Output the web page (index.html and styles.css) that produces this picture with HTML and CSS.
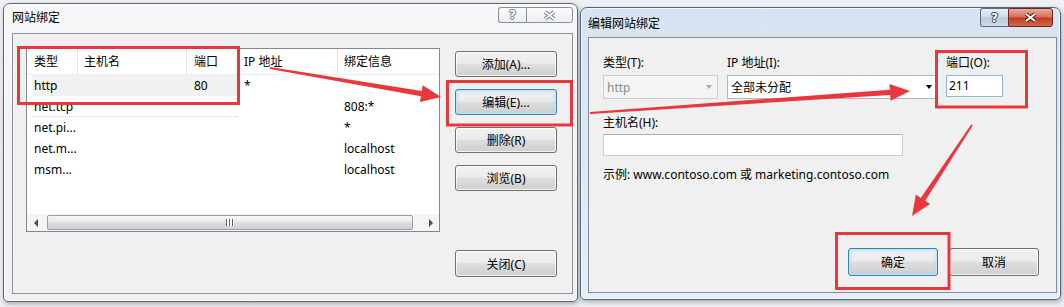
FILE: index.html
```html
<!DOCTYPE html>
<html lang="zh-CN">
<head>
    <meta charset="UTF-8">
    <meta name="viewport" content="width=device-width, initial-scale=1.0">
    <title>网站绑定</title>
    <link rel="stylesheet" href="styles.css">
</head>
<body>
    <div class="screen">
        <!-- 网站绑定 -->
        <div class="dialog bindings">
            <div class="titlebar">
                <span class="title">网站绑定</span>
                <div class="caption">
                    <span class="cap-btn help"><span class="q">?</span></span>
                    <span class="cap-btn close">
                        <svg width="15" height="13" viewBox="-1 -1 15 13"><path d="M2 2 L11 9 M11 2 L2 9" stroke="#7d7f82" stroke-width="4"/><path d="M2 2 L11 9 M11 2 L2 9" stroke="#fbfbfb" stroke-width="2"/></svg>
                    </span>
                </div>
            </div>
            <div class="client">
                <div class="main-row">
                    <div class="listview">
                        <div class="lv-head">
                            <span class="col c-type">类型</span>
                            <span class="col c-host">主机名</span>
                            <span class="col c-port">端口</span>
                            <span class="col c-ip">IP 地址</span>
                            <span class="col c-info">绑定信息</span>
                        </div>
                        <div class="lv-rows">
                            <div class="lv-row selected">
                                <span class="col c-type">http</span><span class="col c-host"></span><span class="col c-port">80</span><span class="col c-ip">*</span><span class="col c-info"></span>
                            </div>
                            <div class="lv-row focus">
                                <span class="col c-type">net.tcp</span><span class="col c-host"></span><span class="col c-port"></span><span class="col c-ip"></span><span class="col c-info">808:*</span>
                            </div>
                            <div class="lv-row">
                                <span class="col c-type">net.pi...</span><span class="col c-host"></span><span class="col c-port"></span><span class="col c-ip"></span><span class="col c-info">*</span>
                            </div>
                            <div class="lv-row">
                                <span class="col c-type">net.m...</span><span class="col c-host"></span><span class="col c-port"></span><span class="col c-ip"></span><span class="col c-info">localhost</span>
                            </div>
                            <div class="lv-row">
                                <span class="col c-type">msm...</span><span class="col c-host"></span><span class="col c-port"></span><span class="col c-ip"></span><span class="col c-info">localhost</span>
                            </div>
                        </div>
                        <div class="hscroll">
                            <span class="sb-arrow left"></span>
                            <div class="sb-track">
                                <div class="sb-thumb"><span class="grip"></span></div>
                            </div>
                            <span class="sb-arrow right"></span>
                        </div>
                    </div>
                    <div class="side-buttons">
                        <button class="btn">添加(A)...</button>
                        <button class="btn default">编辑(E)...</button>
                        <button class="btn">删除(R)</button>
                        <button class="btn">浏览(B)</button>
                    </div>
                </div>
                <div class="footer">
                    <button class="btn close-btn">关闭(C)</button>
                </div>
            </div>
        </div>

        <!-- 编辑网站绑定 -->
        <div class="dialog edit">
            <div class="titlebar">
                <span class="title">编辑网站绑定</span>
                <div class="caption">
                    <span class="cap-btn help"><span class="q">?</span></span>
                    <span class="cap-btn close">
                        <svg width="15" height="13" viewBox="-1 -1 15 13"><path d="M2 2 L11 9 M11 2 L2 9" stroke="#4b1a12" stroke-width="4"/><path d="M2 2 L11 9 M11 2 L2 9" stroke="#ffffff" stroke-width="2"/></svg>
                    </span>
                </div>
            </div>
            <div class="client">
                <div class="field-row">
                    <div class="field f-type">
                        <label>类型(T):</label>
                        <div class="combo disabled"><span>http</span><i class="drop"></i></div>
                    </div>
                    <div class="field f-ip">
                        <label>IP 地址(I):</label>
                        <div class="combo"><span>全部未分配</span><i class="drop"></i></div>
                    </div>
                    <div class="field f-port">
                        <label>端口(O):</label>
                        <div class="textbox port">211</div>
                    </div>
                </div>
                <div class="field f-host">
                    <label>主机名(H):</label>
                    <div class="textbox host"></div>
                </div>
                <p class="hint">示例: www.contoso.com 或 marketing.contoso.com</p>
                <div class="footer">
                    <button class="btn default">确定</button>
                    <button class="btn">取消</button>
                </div>
            </div>
        </div>

        <!-- 标注 -->
        <svg class="marks" width="1064" height="307" viewBox="0 0 1064 307">
            <g fill="none" stroke="#e8383d" stroke-width="3">
                <rect x="18.5" y="47.5" width="220" height="56"/>
                <rect x="447.5" y="81.5" width="124" height="43.5"/>
                <rect x="936.5" y="51.5" width="90" height="55.5"/>
                <rect x="836.5" y="233.5" width="112.5" height="55"/>
            </g>
            <g fill="#e8383d">
                <polygon points="270.17,67.01 421.7,91.1 422.7,85.3 441,97 419.9,102.1 420.9,96.3 269.83,68.99"/>
                <polygon points="589.93,112 889.9,89.8 889.5,83.9 910,91 890.6,100.85 890.2,95 590.07,114"/>
                <polygon points="972.83,125.55 925.2,200.7 930.1,204 912,216 915.9,194.6 920.8,197.9 971.17,124.45"/>
            </g>
        </svg>
    </div>
</body>
</html>
```

FILE: styles.css
```css
* {
    box-sizing: border-box;
}
body {
    margin: 0;
    background: #eef0f3;
    font-family: "Noto Sans", "Noto Sans CJK SC", sans-serif;
    font-size: 12px;
    color: #000;
    overflow: hidden;
}
.screen {
    position: relative;
    width: 1064px;
    height: 307px;
    display: flex;
    align-items: flex-start;
    gap: 2px;
    padding: 3px 0 0 3px;
}

/* window frames */
.dialog {
    display: flex;
    flex-direction: column;
    border: 1px solid #62676d;
    border-radius: 7px 7px 5px 5px;
    box-shadow: 1px 2px 5px rgba(0, 0, 0, 0.3), inset 0 0 0 1px rgba(255, 255, 255, 0.7);
}
.bindings {
    width: 575px;
    height: 299px;
    padding: 0 4px 7px 8px;
    background: linear-gradient(180deg, #f5f6f8 0%, #eef0f2 100%);
}
.edit {
    width: 481px;
    height: 293px;
    margin-top: 4px;
    padding: 0 3px 6px 7px;
    border-color: #4f6580;
    background: linear-gradient(180deg, #d6e3f0 0%, #dde7f2 40%, #e5edf6 100%);
}
.titlebar {
    display: flex;
    align-items: flex-start;
    height: 29px;
    flex: none;
}
.title {
    line-height: 16px;
}
.bindings .title {
    margin-top: 6px;
}
.edit .title {
    margin-top: 8px;
}
.caption {
    margin-left: auto;
    display: flex;
}
.bindings .caption {
    margin-top: 3px;
}
.edit .caption {
    margin-right: 4px;
}
.cap-btn {
    display: flex;
    align-items: center;
    justify-content: center;
    border: 1px solid #8b9097;
}
.cap-btn.help {
    width: 28px;
    border-right: none;
    border-radius: 3px 0 0 3px;
}
.cap-btn.close {
    border-radius: 0 3px 3px 0;
}
.bindings .cap-btn {
    height: 16px;
    background: linear-gradient(180deg, #fbfbfb, #eceef0);
}
.bindings .cap-btn.close {
    width: 47px;
}
.edit .cap-btn {
    height: 19px;
}
.edit .cap-btn.help {
    border-color: #5b6d86;
    background: linear-gradient(180deg, #e6edf5 0%, #cfdbe8 48%, #b9cadd 52%, #cddbea 100%);
}
.edit .cap-btn.close {
    width: 45px;
    border-color: #6b2a20;
    background: linear-gradient(180deg, #e9a899 0%, #d6715d 46%, #c13b22 54%, #d4694a 100%);
}
.q {
    font-family: "DejaVu Sans", sans-serif;
    font-weight: bold;
    font-size: 12px;
    line-height: 12px;
    color: #f8f8f8;
    text-shadow: 1px 0 0 #777, -1px 0 0 #777, 0 1px 0 #777, 0 -1px 0 #777;
}
.edit .q {
    color: #fff;
    text-shadow: 1px 0 0 #2d3e55, -1px 0 0 #2d3e55, 0 1px 0 #2d3e55, 0 -1px 0 #2d3e55;
}

/* client area */
.client {
    flex: 1;
    display: flex;
    flex-direction: column;
    background: #f0f0f0;
    border: 1px solid #8e9297;
}
.bindings .client {
    padding: 14px 15px 16px 13px;
}
.edit .client {
    padding: 17px 17px 16px 14px;
    border-color: #7f8d9c;
}
.main-row {
    display: flex;
    gap: 15px;
}
.footer {
    margin-top: auto;
    display: flex;
    justify-content: flex-end;
    gap: 11px;
}

/* list view */
.listview {
    width: 414px;
    height: 184px;
    display: flex;
    flex-direction: column;
    background: #fff;
    border: 1px solid #828790;
}
.lv-head {
    display: flex;
    height: 26px;
    flex: none;
    border-bottom: 1px solid #ececec;
}
.lv-head .col {
    line-height: 25px;
    border-right: 1px solid #e3e3e3;
}
.col {
    flex: none;
    padding-left: 6px;
    white-space: nowrap;
    overflow: hidden;
}
.c-type {
    width: 51px;
    padding-left: 7px;
}
.c-host {
    width: 109px;
}
.c-port {
    width: 51px;
    padding-left: 7px;
}
.c-ip {
    width: 100px;
}
.lv-head .c-info {
    flex: 1;
    border-right: none;
}
.lv-rows {
    flex: 1;
}
.lv-row {
    display: flex;
    height: 21px;
    line-height: 21px;
    padding-left: 5px;
}
.lv-row .c-type {
    width: 46px;
    padding-left: 2px;
}
.lv-row.selected .c-type,
.lv-row.selected .c-host,
.lv-row.selected .c-port {
    background: #f1f1f1;
}
.lv-row.focus .c-type,
.lv-row.focus .c-host,
.lv-row.focus .c-port {
    border-bottom: 1px dotted #dadada;
}

/* scroll bar */
.hscroll {
    display: flex;
    height: 17px;
    flex: none;
    background: #f4f4f4;
}
.sb-arrow {
    width: 17px;
    display: flex;
    align-items: center;
    justify-content: center;
}
.sb-arrow::before {
    content: "";
    border-style: solid;
    border-color: transparent;
}
.sb-arrow.left::before {
    border-width: 4px 4px 4px 0;
    border-right-color: #4d4d4d;
}
.sb-arrow.right::before {
    border-width: 4px 0 4px 4px;
    border-left-color: #4d4d4d;
}
.sb-track {
    flex: 1;
    padding: 1px 9px 1px 3px;
}
.sb-thumb {
    height: 15px;
    display: flex;
    align-items: center;
    justify-content: center;
    border: 1px solid #9a9ea5;
    border-radius: 2px;
    background: linear-gradient(180deg, #f5f6f7 0%, #e6e8ea 48%, #d8dbde 52%, #d0d3d7 100%);
}
.grip {
    width: 8px;
    height: 7px;
    background: repeating-linear-gradient(90deg, #5f5f5f 0 1px, #fafafa 1px 3px);
}

/* buttons */
.side-buttons {
    display: flex;
    flex-direction: column;
    gap: 12px;
    padding-top: 3px;
    width: 102px;
}
.btn {
    font: inherit;
    color: #000;
    padding: 0;
    border: 1px solid #707070;
    border-radius: 3px;
    background: linear-gradient(180deg, #f2f2f2 0%, #ebebeb 46%, #dddddd 52%, #cfcfcf 100%);
    box-shadow: inset 0 0 0 1px rgba(255, 255, 255, 0.75);
}
.side-buttons .btn {
    height: 26px;
}
.btn.default {
    border-color: #3c7fb1;
    box-shadow: inset 0 0 0 1px #bfe6f8, inset 0 0 3px 2px rgba(160, 215, 242, 0.45);
}
.close-btn {
    width: 102px;
    height: 27px;
}
.edit .footer .btn {
    width: 90px;
    height: 28px;
}

/* edit form */
.field-row {
    display: flex;
}
.field label {
    display: block;
    line-height: 16px;
    margin-bottom: 4px;
}
.f-type {
    width: 115px;
}
.f-ip {
    width: 211px;
    margin-left: 9px;
}
.f-port {
    width: 57px;
    margin-left: 8px;
}
.combo {
    display: flex;
    align-items: center;
    height: 24px;
    padding-left: 3px;
    background: #fff;
    border: 1px solid #b4b7bd;
}
.combo.disabled {
    background: #f4f4f4;
    border-color: #cdcdcd;
    color: #8d8d8d;
}
.drop {
    margin-left: auto;
    margin-right: 5px;
    border-style: solid;
    border-color: transparent;
    border-width: 4px 3.5px 0;
    border-top-color: #000;
}
.combo.disabled .drop {
    border-top-color: #a8a8a8;
}
.textbox {
    height: 22px;
    line-height: 20px;
    padding-left: 2px;
    background: #fff;
    border: 1px solid #c6ccd3;
    border-top-color: #abadb3;
}
.textbox.port {
    border-color: #8fb6dc;
}
.f-host {
    margin-top: 16px;
}
.f-host label {
    margin-bottom: 3px;
}
.textbox.host {
    width: 300px;
}
.hint {
    margin: 11px 0 0;
    line-height: 16px;
}

/* annotations */
.marks {
    position: absolute;
    left: 0;
    top: 0;
    pointer-events: none;
}
```
